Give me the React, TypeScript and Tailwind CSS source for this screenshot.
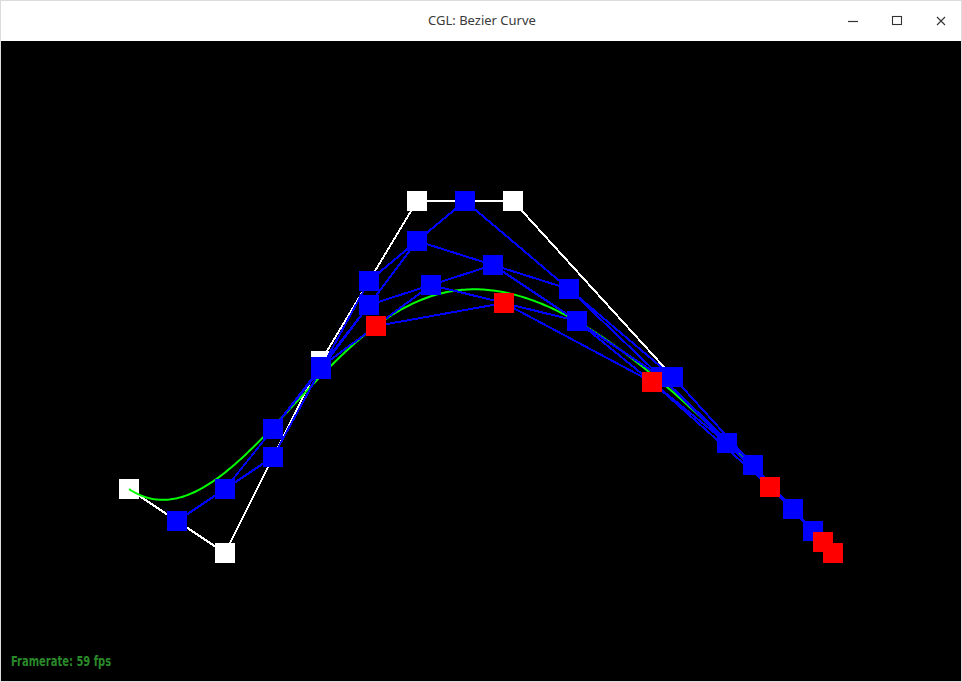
import React from "react";

type Pt = [number, number];

// control points, in page pixels
const ctrl: Pt[] = [
  [129, 489],
  [225, 553],
  [321, 361],
  [417, 201],
  [513, 201],
  [833, 553],
];

const mid = (a: Pt, b: Pt): Pt => [(a[0] + b[0]) / 2, (a[1] + b[1]) / 2];

function bezier(pts: Pt[], t: number): Pt {
  let cur = pts;
  while (cur.length > 1) {
    const next: Pt[] = [];
    for (let i = 0; i < cur.length - 1; i++) {
      next.push([
        cur[i][0] + (cur[i + 1][0] - cur[i][0]) * t,
        cur[i][1] + (cur[i + 1][1] - cur[i][1]) * t,
      ]);
    }
    cur = next;
  }
  return cur[0];
}

function buildScene() {
  // de casteljau levels at t = 0.5
  const levels: Pt[][] = [ctrl];
  while (levels[levels.length - 1].length > 1) {
    const prev = levels[levels.length - 1];
    const next: Pt[] = [];
    for (let i = 0; i < prev.length - 1; i++) next.push(mid(prev[i], prev[i + 1]));
    levels.push(next);
  }

  // right half, then the stepping toward the end point
  const n = ctrl.length - 1;
  const q: Pt[] = levels.map((l) => l[l.length - 1]).reverse();
  const rows: Pt[][] = [q];
  for (let j = 1; j <= n; j++) {
    const prev = rows[j - 1];
    const row: Pt[] = new Array(n + 1);
    row[n] = ctrl[n];
    for (let i = n - 1; i >= 0; i--) row[i] = mid(prev[i], row[i + 1]);
    rows.push(row);
  }

  const segs: [Pt, Pt][] = [];
  for (let k = 1; k < levels.length - 1; k++) {
    const l = levels[k];
    for (let i = 0; i < l.length - 1; i++) segs.push([l[i], l[i + 1]]);
  }
  for (let j = 1; j <= n; j++) {
    for (let i = j - 1; i < n; i++) segs.push([rows[j - 1][i], rows[j][i + 1]]);
  }

  const blue: Pt[] = [];
  for (let k = 1; k < levels.length - 1; k++) blue.push(...levels[k]);
  for (let j = 1; j <= n; j++) for (let i = j + 1; i < n; i++) blue.push(rows[j][i]);

  const red: Pt[] = [levels[levels.length - 1][0]];
  for (let j = 1; j <= n; j++) red.push(rows[j][j]);

  const curve: Pt[] = [];
  for (let s = 0; s <= 300; s++) curve.push(bezier(ctrl, s / 300));

  return { segs, blue, red, curve };
}

const scene = buildScene();

function Square({ p, fill }: { p: Pt; fill: string }) {
  return <rect x={Math.round(p[0]) - 10} y={Math.round(p[1]) - 10} width={20} height={20} fill={fill} />;
}

export default function App() {
  return (
    <div className="w-[962px] h-[682px] flex flex-col border border-[#dcdcdc] bg-white">
      <div className="h-10 grid grid-cols-[1fr_auto_1fr] items-center bg-white">
        <div />
        <div className="text-[13px] text-[#3a3a3a] font-['Noto_Sans',sans-serif] pl-[2px]">CGL: Bezier Curve</div>
        <div className="flex justify-end items-center gap-[32px] pr-[14px] text-[#333]">
          <svg width="12" height="12" viewBox="0 0 12 12">
            <path d="M1 6.5h10" stroke="#333" strokeWidth="1.2" />
          </svg>
          <svg width="12" height="12" viewBox="0 0 12 12">
            <rect x="1.5" y="1.5" width="9" height="8" fill="none" stroke="#333" strokeWidth="1.1" />
          </svg>
          <svg width="12" height="12" viewBox="0 0 12 12">
            <path d="M2 2l8 8M10 2l-8 8" stroke="#333" strokeWidth="1.1" />
          </svg>
        </div>
      </div>
      <div className="relative flex-1 bg-black">
        <svg className="block" width="960" height="640" viewBox="1 41 960 640" shapeRendering="crispEdges">
          <polyline
            points={ctrl.map((p) => p.join(",")).join(" ")}
            fill="none"
            stroke="#ffffff"
            strokeWidth="2"
          />
          {ctrl.map((p, i) => (
            <Square key={"w" + i} p={p} fill="#ffffff" />
          ))}
          <polyline
            points={scene.curve.map((p) => p.join(",")).join(" ")}
            fill="none"
            stroke="#00ff00"
            strokeWidth="2"
            shapeRendering="auto"
          />
          {scene.segs.map(([a, b], i) => (
            <line key={"l" + i} x1={a[0]} y1={a[1]} x2={b[0]} y2={b[1]} stroke="#0000ff" strokeWidth="2" />
          ))}
          {scene.blue.map((p, i) => (
            <Square key={"b" + i} p={p} fill="#0000ff" />
          ))}
          {scene.red.map((p, i) => (
            <Square key={"r" + i} p={p} fill="#ff0000" />
          ))}
        </svg>
        <div className="absolute left-[10px] bottom-[9px] origin-left scale-x-[0.79] text-[14px] font-bold text-[#2a8a2a] font-['DejaVu_Sans_Condensed','DejaVu_Sans',sans-serif]">
          Framerate: 59 fps
        </div>
      </div>
    </div>
  );
}
